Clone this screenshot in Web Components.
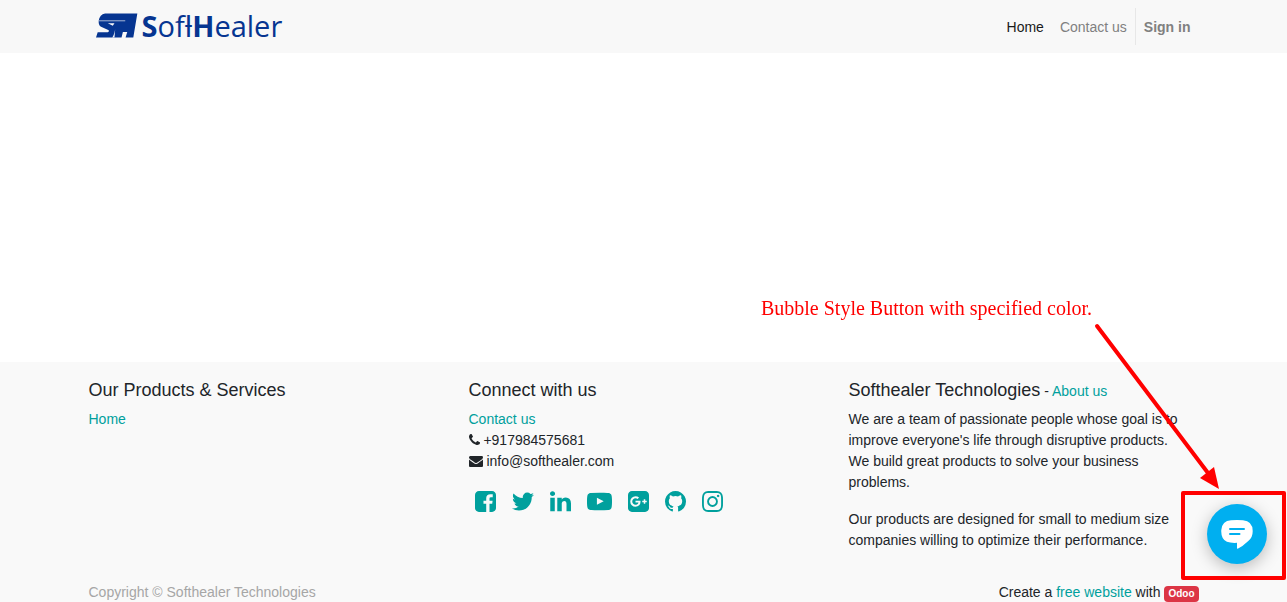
<!DOCTYPE html>
<html lang="en">
<head>
<meta charset="utf-8">
<meta name="viewport" content="width=device-width, initial-scale=1">
<title>Home | Softhealer Technologies</title>
<style>
    body {
        margin: 0;
        --text: #212529;
        --muted: #808080;
        --link: #00a09d;
        --bar: #f9f9f9;
        --gutter: 15px;
        font-family: "Liberation Sans", Arial, sans-serif;
        font-size: 14px;
        line-height: 21px;
        color: var(--text);
        background: #fff;
    }
</style>
</head>
<body>
<site-page>
    <site-header slot="header">
        <brand-logo></brand-logo>
        <nav-item slot="nav" href="#home" active>Home</nav-item>
        <nav-item slot="nav" href="#contact">Contact us</nav-item>
        <nav-item slot="nav" href="#login" divided>Sign in</nav-item>
    </site-header>
    <site-footer slot="footer"></site-footer>
</site-page>
<chat-bubble></chat-bubble>
<callout-note>Bubble Style Button with specified color.</callout-note>

<script>
/* Icon outlines on a 1792 unit grid: [viewBox, width, path] */
const ICONS = {
    phone: ['192 0 1408 1792', 11, 'M1600 1240q0 27-10 70.5t-21 68.5q-21 50-122 106-94 51-186 51-27 0-53-3.5t-57-12.5-47-14.5-55.5-20.5-49.5-18q-98-35-175-83-127-79-264-216t-216-264q-48-77-83-175-3-9-18-49.5t-20.5-55.5-14.5-47-12.5-57-3.5-53q0-92 51-186 56-101 106-122 25-11 68.5-21t70.5-10q14 0 21 3 18 6 53 76 11 19 30 54t35 63.5 31 53.5q3 4 17.5 25t21.5 35.5 7 28.5q0 20-28.5 50t-62 55-62 53-28.5 46q0 9 5 22.5t8.5 20.5 14 24 11.5 19q76 137 174 235t235 174q2 1 19 11.5t24 14 20.5 8.5 22.5 5q18 0 46-28.5t53-62 55-62 50-28.5q14 0 28.5 7t35.5 21.5 25 17.5q25 15 53.5 31t63.5 35 54 30q70 35 76 53 3 7 3 21z'],
    envelope: ['0 0 1792 1792', 14, 'M1792 710v794q0 66-47 113t-113 47h-1472q-66 0-113-47t-47-113v-794q44 49 101 87 362 246 497 345 57 42 92.5 65.5t94.5 48 110 24.5h2q51 0 110-24.5t94.5-48 92.5-65.5q170-123 498-345 57-39 100-87zm0-294q0 79-49 151t-122 123q-376 261-468 325-10 7-42.5 31t-54 38.5-52 32.5-57.5 27-50 9h-2q-23 0-50-9t-57.5-27-52-32.5-54-38.5-42.5-31q-91-64-262-182.5t-205-142.5q-62-42-117-115.5t-55-136.5q0-78 41.5-130t118.5-52h1472q65 0 112.5 47t47.5 113z'],
    facebook: ['128 0 1536 1792', 21, 'M1376 128q119 0 203.5 84.5t84.5 203.5v960q0 119-84.5 203.5t-203.5 84.5h-188v-595h199l30-232h-229v-148q0-56 23.5-84t91.5-28l122-1v-207q-63-9-178-9-136 0-217.5 80t-81.5 226v171h-200v232h200v595h-532q-119 0-203.5-84.5t-84.5-203.5v-960q0-119 84.5-203.5t203.5-84.5h960z'],
    twitter: ['108 0 1576 1792', 22, 'M1684 408q-67 98-162 167 1 14 1 42 0 130-38 259.5t-115.5 248.5-184.5 210.5-258 146-323 54.5q-271 0-496-145 35 4 78 4 225 0 401-138-105-2-188-64.5t-114-159.5q33 5 61 5 43 0 85-11-112-23-185.5-111.5t-73.5-205.5v-4q68 38 146 41-66-44-105-115t-39-154q0-88 44-163 121 149 294.5 238.5t371.5 99.5q-8-38-8-74 0-134 94.5-228.5t228.5-94.5q140 0 236 102 109-21 205-78-37 115-142 178 93-10 186-50z'],
    linkedin: ['128 0 1536 1792', 21, 'M477 625v991h-330v-991h330zm21-306q1 73-50.5 122t-135.5 49h-2q-82 0-132-49t-50-122q0-74 51.5-122.5t134.5-48.5 133 48.5 51 122.5zm1166 729v568h-329v-530q0-105-40.5-164.5t-126.5-59.5q-63 0-105.5 34.5t-63.5 85.5q-11 30-11 81v553h-329q2-399 2-647t-1-296l-1-48h329v144h-2q20-32 41-56t56.5-52 87-43.5 114.5-15.5q171 0 275 113.5t104 332.5z'],
    youtube: ['0 0 1792 1792', 25, 'M711 1128l484-250-484-253v503zm185-862q168 0 324.5 4.5t229.5 9.5l73 4q1 0 17 1.5t23 3 23.5 4.5 28.5 8 28 13 31 19.5 29 26.5q6 6 15.5 18.5t29 58.5 26.5 101q8 64 12.5 136.5t5.5 113.5v176q1 145-18 290-7 55-25 99.5t-32 61.5l-14 17q-14 15-29 26.5t-31 19-28 12.5-28.5 8-24 4.5-23 3-16.5 1.5q-251 19-627 19-207-2-359.5-6.5t-200.5-7.5l-49-4-36-4q-36-5-54.5-10t-51-21-56.5-41q-6-6-15.5-18.5t-29-58.5-26.5-101q-8-64-12.5-136.5t-5.5-113.5v-176q-1-145 18-290 7-55 25-99.5t32-61.5l14-17q14-15 29-26.5t31-19.5 28-13 28.5-8 23.5-4.5 23-3 17-1.5q251-18 627-18z'],
    google: ['128 0 1536 1792', 21, 'M1045 905q0-26-6-64h-362v132h217q-3 24-16.5 50t-37.5 53-66.5 44.5-96.5 17.5q-99 0-169-71t-70-171 70-171 169-71q92 0 153 59l104-101q-108-100-257-100-160 0-272 112.5t-112 271.5 112 271.5 272 112.5q165 0 266.5-105t101.5-270zm345 46h109v-110h-109v-110h-110v110h-110v110h110v110h110v-110zm274-535v960q0 119-84.5 203.5t-203.5 84.5h-960q-119 0-203.5-84.5t-84.5-203.5v-960q0-119 84.5-203.5t203.5-84.5h960q119 0 203.5 84.5t84.5 203.5z'],
    github: ['128 0 1536 1792', 21, 'M896 128q209 0 385.5 103t279.5 279.5 103 385.5q0 251-146.5 451.5t-378.5 277.5q-27 5-40-7t-13-30q0-3 .5-76.5t.5-134.5q0-97-52-142 57-6 102.5-18t94-39 81-66.5 53-105 20.5-150.5q0-119-79-206 37-91-8-204-28-9-81 11t-92 44l-38 24q-93-26-192-26t-192 26q-16-11-42.5-27t-83.5-38.5-85-13.5q-45 113-8 204-79 87-79 206 0 85 20.5 150t52.5 105 80.5 67 94 39 102.5 18q-39 36-49 103-21 10-45 15t-57 5-65.5-21.5-55.5-62.5q-19-32-48.5-52t-49.5-24l-20-3q-21 0-29 4.5t-5 11.5 9 14 13 12l7 5q22 10 43.5 38t31.5 51l10 23q13 38 44 61.5t67 30 69.5 7 55.5-3.5l23-4q0 38 .5 88.5t.5 54.5q0 18-13 30t-40 7q-232-77-378.5-277.5t-146.5-451.5q0-209 103-385.5t279.5-279.5 385.5-103z'],
    instagram: ['128 0 1536 1792', 21, 'M1152 896q0-106-75-181t-181-75-181 75-75 181 75 181 181 75 181-75 75-181zm138 0q0 164-115 279t-279 115-279-115-115-279 115-279 279-115 279 115 115 279zm108-410q0 38-27 65t-65 27-65-27-27-65 27-65 65-27 65 27 27 65zm-502-220q-7 0-76.5-.5t-105.5 0-96.5 3-103 10-71.5 18.5q-50 20-88 58t-58 88q-11 29-18.5 71.5t-10 103-3 96.5 0 105.5.5 76.5-.5 76.5 0 105.5 3 96.5 10 103 18.5 71.5q20 50 58 88t88 58q29 11 71.5 18.5t103 10 96.5 3 105.5 0 76.5-.5 76.5.5 105.5 0 96.5-3 103-10 71.5-18.5q50-20 88-58t58-88q11-29 18.5-71.5t10-103 3-96.5 0-105.5-.5-76.5.5-76.5 0-105.5-3-96.5-10-103-18.5-71.5q-20-50-58-88t-88-58q-29-11-71.5-18.5t-103-10-96.5-3-105.5 0-76.5.5zm768 630q0 229-5 317-10 208-124 322t-322 124q-88 5-317 5t-317-5q-208-10-322-124t-124-322q-5-88-5-317t5-317q10-208 124-322t322-124q88-5 317-5t317 5q208 10 322 124t124 322q5 88 5 317z']
};

/* Shared base: opens the shadow root and fills it from render() */
class SiteElement extends HTMLElement {
    constructor() {
        super();
        this.attachShadow({ mode: 'open' });
    }

    connectedCallback() {
        this.shadowRoot.innerHTML = this.render();
    }
}

class SitePage extends SiteElement {
    render() {
        return `
            <style>
                :host {
                    display: flex;
                    flex-direction: column;
                    min-height: 100vh;
                }
                main { flex: 1; }
            </style>
            <slot name="header"></slot>
            <main><slot></slot></main>
            <slot name="footer"></slot>
        `;
    }
}

class SiteHeader extends SiteElement {
    render() {
        return `
            <style>
                :host {
                    display: block;
                    background: #f8f8f8;
                }
                header {
                    display: flex;
                    align-items: center;
                    justify-content: space-between;
                    box-sizing: border-box;
                    max-width: 1140px;
                    margin: 0 auto;
                    padding: 8px var(--gutter);
                }
                nav {
                    display: flex;
                    align-items: stretch;
                }
            </style>
            <header>
                <slot></slot>
                <nav aria-label="Main"><slot name="nav"></slot></nav>
            </header>
        `;
    }
}

class NavItem extends SiteElement {
    render() {
        return `
            <style>
                :host { display: block; }
                :host([divided]) {
                    border-left: 1px solid #e7e7e7;
                    font-weight: bold;
                }
                a {
                    display: block;
                    padding: 9px 8px 7px;
                    color: var(--muted);
                    text-decoration: none;
                }
                :host([active]) a { color: #1a1a1a; }
            </style>
            <a href="${this.getAttribute('href')}"><slot></slot></a>
        `;
    }
}

class BrandLogo extends SiteElement {
    render() {
        return `
            <style>
                :host { display: block; }
                a {
                    display: flex;
                    align-items: center;
                    gap: 4px;
                    padding: 0 0 2px 6px;
                    color: #063591;
                    font-family: "Open Sans", "Noto Sans", sans-serif;
                    font-size: 29px;
                    line-height: 35px;
                    text-decoration: none;
                }
                svg { display: block; }
            </style>
            <a href="#home" aria-label="SoftHealer">
                <svg width="43" height="25" viewBox="46 38 128 74" aria-hidden="true">
                    <path fill="currentColor" d="M76 39H172L160 111H137L142 94H129L125 111H49L54 95H84Q89 94 87 89L64 79Q56 75 57 61Q60 41 76 39Z"/>
                    <path fill="none" stroke="#f8f8f8" stroke-width="2" d="M58 61H136"/>
                    <path fill="#f8f8f8" d="M84 68H104L99 76ZM106 86L104 111H97Q103 104 106 86Z"/>
                </svg>
                <span><b>S</b>ofƚ<b>H</b>ealer</span>
            </a>
        `;
    }
}

class GlyphIcon extends SiteElement {
    render() {
        const [box, width, path] = ICONS[this.getAttribute('name')];
        return `
            <style>
                :host { display: inline-block; }
                svg {
                    display: block;
                    width: ${width}px;
                    height: var(--icon-height, 14px);
                }
            </style>
            <svg viewBox="${box}" aria-hidden="true"><path fill="currentColor" d="${path}"/></svg>
        `;
    }
}

class SocialLinks extends SiteElement {
    render() {
        const names = ['facebook', 'twitter', 'linkedin', 'youtube', 'google', 'github', 'instagram'];
        return `
            <style>
                :host {
                    display: flex;
                    gap: 16px;
                    --icon-height: 25px;
                }
                a {
                    display: block;
                    color: var(--link);
                }
                glyph-icon { display: block; }
            </style>
            ${names.map(name => `<a href="#${name}" aria-label="${name}"><glyph-icon name="${name}"></glyph-icon></a>`).join('')}
        `;
    }
}

class FooterColumn extends SiteElement {
    render() {
        return `
            <style>
                :host {
                    display: block;
                    flex: 1 1 0;
                    box-sizing: border-box;
                    padding: 0 var(--gutter);
                }
                h5 {
                    margin: 0 0 7px;
                    font-size: 14px;
                    font-weight: normal;
                    line-height: 21px;
                }
                h5 span { font-size: 18px; }
            </style>
            <h5><span>${this.getAttribute('heading')}</span><slot name="aside"></slot></h5>
            <slot></slot>
        `;
    }
}

class SiteFooter extends SiteElement {
    render() {
        return `
            <style>
                :host {
                    display: block;
                    background: var(--bar);
                }
                footer {
                    max-width: 1140px;
                    margin: 0 auto;
                    padding-top: 18px;
                }
                .columns { display: flex; }
                ul {
                    margin: 0;
                    padding: 0;
                    list-style: none;
                }
                p { margin: 0 0 16px; }
                a {
                    color: var(--link);
                    text-decoration: none;
                }
                .contact a.plain { color: inherit; }
                .contact glyph-icon { vertical-align: -2px; }
                social-links { padding: 17px 6px 0; }
                .bottom {
                    display: flex;
                    justify-content: space-between;
                    padding: 16px var(--gutter) 0;
                    line-height: 18px;
                }
                .copyright { color: #a6a6a6; }
                .badge {
                    display: inline-block;
                    padding: 0 4px;
                    border-radius: 4px;
                    background: #dc3545;
                    color: #fff;
                    font-size: 10px;
                    font-weight: bold;
                    line-height: 16px;
                }
            </style>
            <footer>
                <div class="columns">
                    <footer-column heading="Our Products &amp;amp; Services">
                        <ul><li><a href="#home">Home</a></li></ul>
                    </footer-column>
                    <footer-column heading="Connect with us">
                        <ul class="contact">
                            <li><a href="#contact">Contact us</a></li>
                            <li><glyph-icon name="phone"></glyph-icon> <a class="plain" href="tel:+917984575681">+917984575681</a></li>
                            <li><glyph-icon name="envelope"></glyph-icon> <a class="plain" href="mailto:info@softhealer.com">info@softhealer.com</a></li>
                        </ul>
                        <social-links></social-links>
                    </footer-column>
                    <footer-column heading="Softhealer Technologies">
                        <span slot="aside"> - <a href="#about">About us</a></span>
                        <p>We are a team of passionate people whose goal is to improve everyone's life through disruptive products.<br>We build great products to solve your business<br>problems.</p>
                        <p>Our products are designed for small to medium size companies willing to optimize their performance.</p>
                    </footer-column>
                </div>
                <div class="bottom">
                    <span class="copyright">Copyright © Softhealer Technologies</span>
                    <span>Create a <a href="#free">free website</a> with <a class="badge" href="#odoo">Odoo</a></span>
                </div>
            </footer>
        `;
    }
}

/* Floating live chat button, pinned to the bottom right corner */
class ChatBubble extends SiteElement {
    render() {
        return `
            <style>
                :host {
                    position: fixed;
                    right: 20px;
                    bottom: 38px;
                }
                button {
                    display: grid;
                    place-items: center;
                    width: 60px;
                    height: 60px;
                    padding: 0;
                    border: 0;
                    border-radius: 50%;
                    background: #00aff0;
                    box-shadow: 0 4px 16px rgba(0, 0, 0, 0.25);
                    cursor: pointer;
                }
            </style>
            <button type="button" aria-label="Open chat">
                <svg width="32" height="29" viewBox="0 0 32 29">
                    <path fill="#fff" d="M10 0.3Q16-.3 22 0.3Q31.5 1 31.7 11Q31.8 18 27 21.2Q22 26 16.7 28.8Q16 29 16 28V22.8Q4.5 23.5 1.7 18Q0 15 .3 10Q1 1 10 .3Z"/>
                    <path stroke="#00aff0" stroke-width="2" stroke-linecap="round" d="M9 9H23M9 14H18.500"/>
                </svg>
            </button>
        `;
    }
}

/* Red note with an arrow and a frame around the chat button */
class CalloutNote extends SiteElement {
    render() {
        return `
            <style>
                :host {
                    position: fixed;
                    right: 1px;
                    bottom: 22px;
                    display: flex;
                    flex-direction: column;
                    align-items: flex-end;
                    color: #f00;
                    font-family: "Liberation Serif", "Times New Roman", serif;
                    font-size: 20px;
                    line-height: 24px;
                    pointer-events: none;
                }
                span { padding-right: 194px; }
                svg { display: block; }
                .frame {
                    box-sizing: border-box;
                    width: 105px;
                    height: 89px;
                    border: 4px solid;
                    border-radius: 2px;
                }
            </style>
            <span><slot></slot></span>
            <svg width="196" height="171" viewBox="1090 320 196 171" aria-hidden="true">
                <path stroke="currentColor" stroke-width="4" stroke-linecap="round" d="M1097 326L1208 473"/>
                <path fill="currentColor" d="M1219 489L1200 478L1214 467Z"/>
            </svg>
            <div class="frame"></div>
        `;
    }
}

customElements.define('glyph-icon', GlyphIcon);
customElements.define('nav-item', NavItem);
customElements.define('brand-logo', BrandLogo);
customElements.define('site-header', SiteHeader);
customElements.define('social-links', SocialLinks);
customElements.define('footer-column', FooterColumn);
customElements.define('site-footer', SiteFooter);
customElements.define('site-page', SitePage);
customElements.define('chat-bubble', ChatBubble);
customElements.define('callout-note', CalloutNote);
</script>
</body>
</html>
